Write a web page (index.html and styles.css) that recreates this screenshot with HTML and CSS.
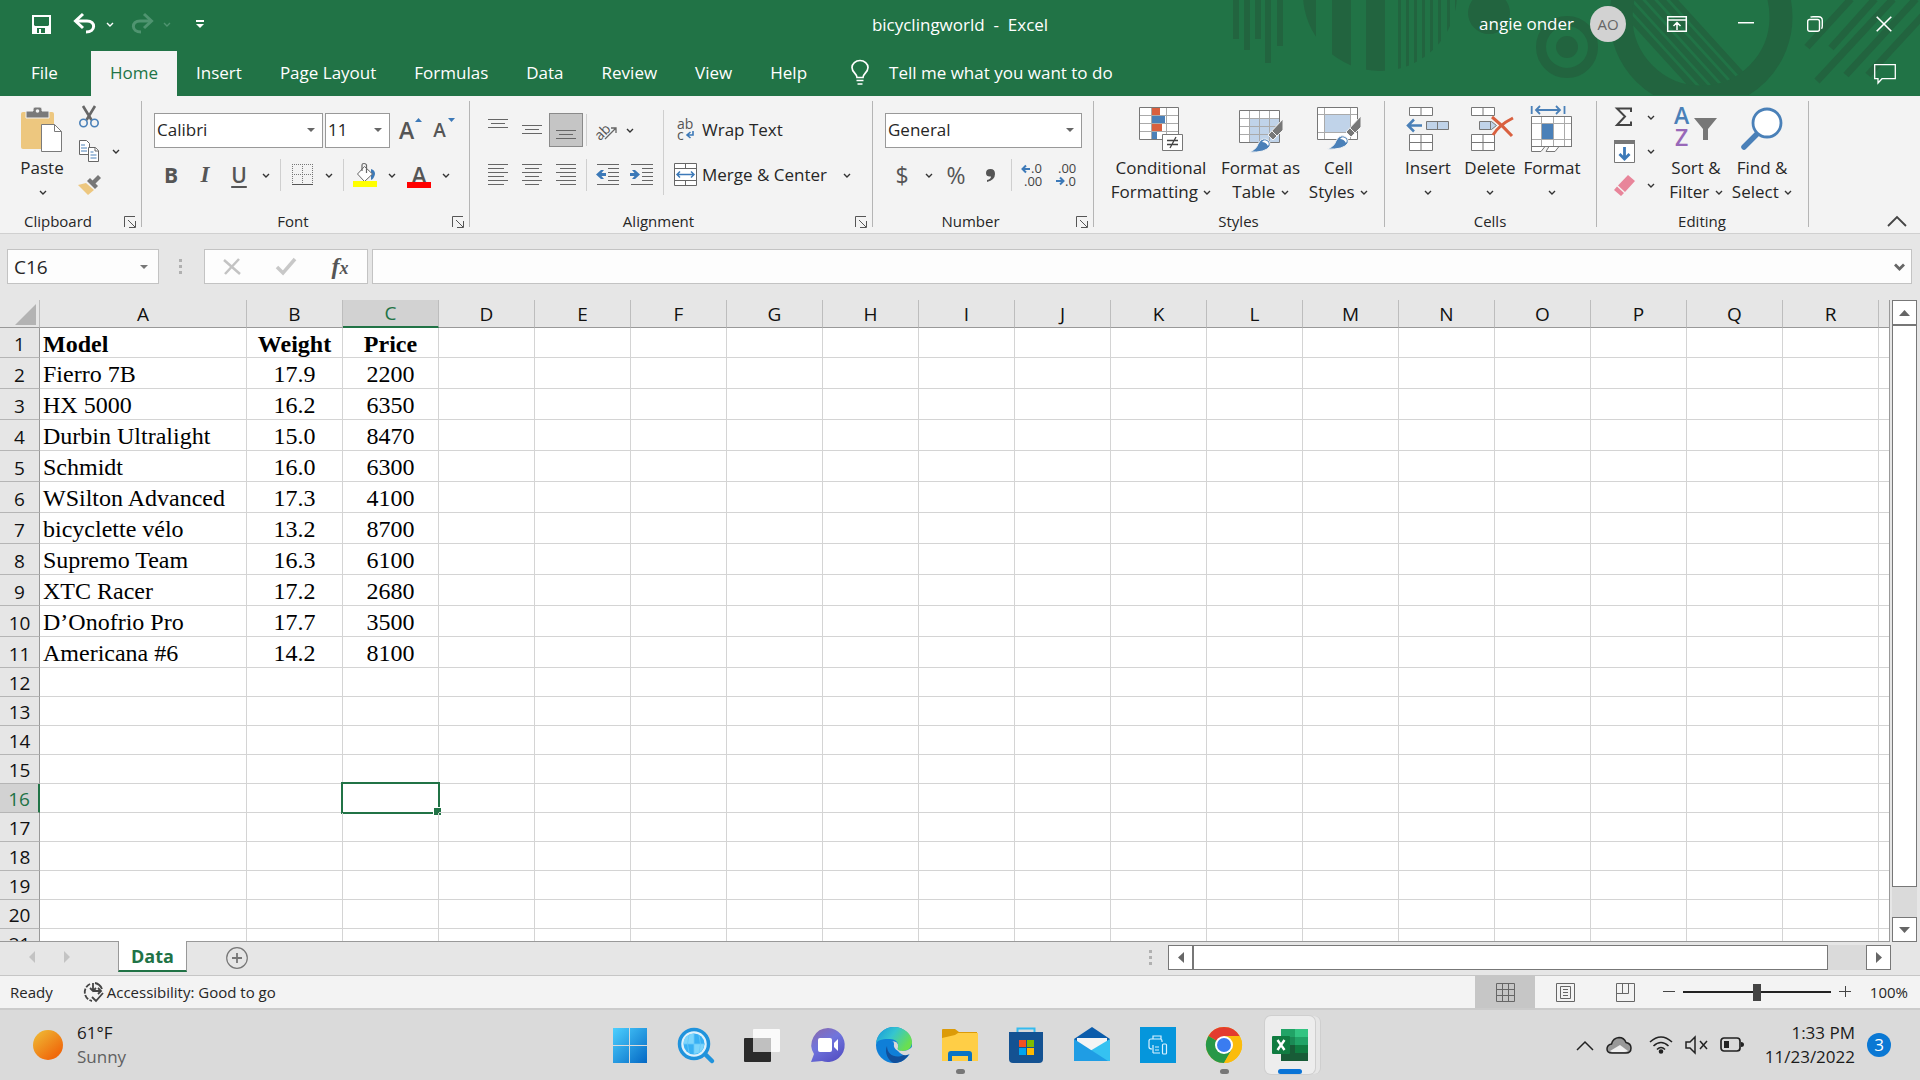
FILE: index.html
```html
<!DOCTYPE html>
<html lang="en">
<head>
  <meta charset="UTF-8">
  <title>bicyclingworld - Excel</title>
  <link rel="stylesheet" href="styles.css">
</head>
<body>
  <svg class="defs" width="0" height="0">
    <symbol id="chevron" viewBox="0 0 8 5"><path d="M1 1l3 3 3-3" fill="none" stroke="currentColor" stroke-width="1.4"/></symbol>
    <symbol id="launcher" viewBox="0 0 12 12"><path d="M.5 11V.5H11M4 4l7 7M11.500 5v6.500H5" fill="none" stroke="#555"/></symbol>
  </svg>

  <header class="header">
    <svg class="header-art" width="690" height="95" viewBox="1230 0 690 95" fill="#22643f">
      <clipPath id="ball"><circle cx="1380" cy="-6" r="77"/></clipPath>
      <clipPath id="hole"><circle cx="1701" cy="17" r="69"/></clipPath>
      <path d="M1233 0h6v39h-6zM1244 0h6v50h-6zM1255 0h6v39h-6zM1265 0h6v63h-6zM1277 0h6v46h-6z"/>
      <path clip-path="url(#ball)" d="M1303 0h13v72h-13zM1332 0h19v72h-19zM1366 0h19v72h-19zM1398 0h3v72h-3zM1406 0h3v72h-3zM1414 0h3v72h-3zM1422 0h3v72h-3zM1430 0h3v72h-3zM1438 0h3v72h-3zM1447 0h3v72h-3zM1455 0h3v72h-3z"/>
      <circle cx="1489" cy="13" r="21"/>
      <circle cx="1567" cy="47" r="26" fill="none" stroke="#22643f" stroke-width="10"/>
      <circle cx="1567" cy="47" r="11"/>
      <circle cx="1701" cy="17" r="80" fill="none" stroke="#22643f" stroke-width="23"/>
      <g clip-path="url(#hole)" stroke="#22643f" stroke-width="6">
        <path d="M1665-10l100 110M1653-10l100 110M1641-10l100 110M1629-10l100 110M1617-10l100 110M1605-10l100 110"/>
      </g>
      <path d="M1807 47L1851-1M1831 48L1875-1M1817 81L1893-1M1846 75L1916-1M1868 75l70-76" stroke="#22643f" stroke-width="7"/>
    </svg>

    <div class="title-row">
      <div class="quick">
        <button class="q-btn save" aria-label="Save"><svg width="19" height="19" viewBox="0 0 19 19"><path fill="#fff" fill-rule="evenodd" d="M0 0h19v19H0zM2 2v8l1 1h13l1-1V2zM5 13v5h2v-4h2v4h4v-5z"/></svg></button>
        <button class="q-btn undo" aria-label="Undo"><svg width="22" height="20" viewBox="0 0 22 20"><path d="M2 7h11c9 0 9 11-1 11" fill="none" stroke="#fff" stroke-width="3"/><path d="M9 0L1.500 7 9 14" fill="none" stroke="#fff" stroke-width="3"/></svg></button>
        <button class="q-btn drop" aria-label="Undo list"><svg width="8" height="5"><use href="#chevron"/></svg></button>
        <button class="q-btn redo" aria-label="Redo" disabled><svg width="22" height="20" viewBox="0 0 22 20"><path d="M20 7H9c-9 0-9 11 1 11" fill="none" stroke="#4f9470" stroke-width="3"/><path d="M13 0l7.500 7-7.500 7" fill="none" stroke="#4f9470" stroke-width="3"/></svg></button>
        <button class="q-btn drop faded" aria-label="Redo list" disabled><svg width="8" height="5"><use href="#chevron"/></svg></button>
        <button class="q-btn more" aria-label="Customize"><svg width="8" height="8" viewBox="0 0 8 8" fill="#fff"><path d="M0 0h8v2H0zM0 4h8L4 8z"/></svg></button>
      </div>
      <div class="doc-title">bicyclingworld&nbsp; - &nbsp;Excel</div>
      <div class="window-side">
        <span class="user">angie onder</span>
        <button class="avatar">AO</button>
        <div class="window-btns">
          <button class="w-btn" aria-label="Ribbon display"><svg width="20" height="16" viewBox="0 0 20 16" fill="none" stroke="#fff" stroke-width="1.500"><path d="M.7.700h18.600v14.600H.700zM.7 4h18.600M10 14V7M6.500 10L10 6.500l3.500 3.500"/></svg></button>
          <button class="w-btn" aria-label="Minimize"><svg width="16" height="16" viewBox="0 0 16 16"><path d="M0 6h16v1.500H0z" fill="#fff"/></svg></button>
          <button class="w-btn" aria-label="Restore"><svg width="16" height="16" viewBox="0 0 16 16" fill="none" stroke="#fff" stroke-width="1.400"><rect x=".7" y="3.500" width="11.800" height="11.800" rx="2"/><path d="M3.500 1.200Q4.500.700 6 .7h5.500q3.800 0 3.800 3.800V10q0 1.800-.8 2.800"/></svg></button>
          <button class="w-btn" aria-label="Close"><svg width="16" height="16" viewBox="0 0 16 16"><path d="M.7.700l14.600 14.600M15.300.700L.700 15.300" stroke="#fff" stroke-width="1.600"/></svg></button>
        </div>
      </div>
    </div>

    <nav class="tabs">
      <button class="tab file">File</button>
      <button class="tab active">Home</button>
      <button class="tab">Insert</button>
      <button class="tab">Page Layout</button>
      <button class="tab">Formulas</button>
      <button class="tab">Data</button>
      <button class="tab">Review</button>
      <button class="tab">View</button>
      <button class="tab">Help</button>
      <button class="tab tell">
        <svg width="18" height="25" viewBox="0 0 18 25" fill="none" stroke="#fff" stroke-width="1.700"><path d="M6 17.500c0-4-5-5-5-10a8 7 0 0 1 16 0c0 5-5 6-5 10zM5.500 20.500h7M6.500 24h5"/></svg>
        Tell me what you want to do
      </button>
      <button class="comment" aria-label="Comments"><svg width="22" height="20" viewBox="0 0 22 20" fill="none" stroke="#fff" stroke-width="1.300"><path d="M.7.700h20.600v14H8L4 19v-4.300H.700z"/></svg></button>
    </nav>
  </header>

  <section class="ribbon">
    <div class="group clipboard">
      <div class="group-body">
        <button class="big paste">
          <svg width="42" height="46" viewBox="0 0 42 46"><rect y="5" width="33" height="37" rx="2" fill="#edc77f"/><path d="M5 4h7V2q0-2 2-2h5q2 0 2 2v2h7v7H5z" fill="#7a7a7a" stroke="#f3f3f3"/><circle cx="16.500" cy="4" r="1.800" fill="#f3f3f3"/><path d="M20.500 17.500h13l7 7v20h-20z" fill="#fff" stroke="#7a7a7a"/><path d="M33.500 17.500v7h7" fill="none" stroke="#7a7a7a"/></svg>
          <span>Paste</span>
          <span><svg class="chev" width="8" height="5"><use href="#chevron"/></svg></span>
        </button>
        <div class="clip-col">
          <div class="tools"><button class="tool" aria-label="Cut"><svg width="20" height="22" viewBox="0 0 20 22" fill="none"><path d="M4 0l8.500 14M16 0L7.500 14" stroke="#666" stroke-width="2.600"/><circle cx="4.500" cy="17" r="3.700" stroke="#4a80b8" stroke-width="1.600"/><circle cx="15.500" cy="17" r="3.700" stroke="#4a80b8" stroke-width="1.600"/></svg></button></div>
          <div class="tools"><button class="tool" aria-label="Copy"><svg width="20" height="22" viewBox="0 0 20 22" fill="#fff" stroke="#666"><path d="M.5.500h7l3 3v11H.500z"/><path d="M2 5h4M2 8h6M2 11h6" stroke="#4a80b8"/><path d="M9.500 7.500h7l3 3v11h-10z"/><path d="M16 7.500V11h3.500"/><path d="M11.500 12h3M11.500 15h6M11.500 18h6" stroke="#4a80b8"/></svg></button><button class="arrow" aria-label="Copy options"><svg class="chev" width="8" height="5"><use href="#chevron"/></svg></button></div>
          <div class="tools"><button class="tool" aria-label="Format Painter"><svg width="23" height="20" viewBox="0 0 23 20"><path d="M0 10l8-2 8 7-6 5z" fill="#edc77f"/><path d="M9 6l3-3 8 8-3 3z" fill="#777"/><path d="M14 6l6-6 3 3-6 6z" fill="#777"/></svg></button></div>
        </div>
      </div>
      <div class="group-foot"><span>Clipboard</span><button class="launch" aria-label="Clipboard settings"><svg width="12" height="12"><use href="#launcher"/></svg></button></div>
    </div>

    <div class="group font">
      <div class="group-body rows">
        <div class="tools">
          <span class="combo font-name"><select aria-label="Font"><option>Calibri</option></select></span>
          <span class="combo font-size"><select aria-label="Font size"><option>11</option></select></span>
          <button class="tool glyph grow" aria-label="Increase font size">A<svg class="tip" width="7" height="4"><path d="M0 4l3.500-4L7 4z" fill="#3c79b8"/></svg></button>
          <button class="tool glyph shrink" aria-label="Decrease font size">A<svg class="tip" width="7" height="4"><path d="M0 0h7L3.500 4z" fill="#3c79b8"/></svg></button>
        </div>
        <div class="tools">
          <button class="tool glyph bold" aria-label="Bold">B</button>
          <button class="tool glyph italic" aria-label="Italic">I</button>
          <button class="tool glyph under" aria-label="Underline">U</button>
          <button class="arrow" aria-label="Underline options"><svg class="chev" width="8" height="5"><use href="#chevron"/></svg></button>
          <i class="sep"></i>
          <button class="tool" aria-label="Borders"><svg width="21" height="22" viewBox="0 0 21 22" fill="#777"><defs><pattern id="dotted" width="2" height="2" patternUnits="userSpaceOnUse"><path d="M0 0h1v1H0z"/></pattern></defs><path d="M0 0h21v1H0zM0 10h21v1H0zM0 0h1v20H0zM10 0h1v20h-1zM20 0h1v20h-1z" fill="url(#dotted)"/><path d="M0 20h21v1H0z" fill="#555"/></svg></button>
          <button class="arrow" aria-label="Border options"><svg class="chev" width="8" height="5"><use href="#chevron"/></svg></button>
          <i class="sep"></i>
          <button class="tool" aria-label="Fill color"><svg width="24" height="24" viewBox="0 0 24 24"><path d="M18 6q4 1 4 5-1 5-4 6z" fill="#3c79b8"/><path d="M11.500 3.500l8 7.500-8 7.500L4.500 11z" fill="#fff" stroke="#666"/><path d="M9 8V2q0-1.500 2-1.500t2.500 1.500v8" fill="none" stroke="#666" stroke-width="1.200"/><path d="M0 18h24v6H0z" fill="#ff0"/></svg></button>
          <button class="arrow" aria-label="Fill colors"><svg class="chev" width="8" height="5"><use href="#chevron"/></svg></button>
          <button class="tool glyph color" aria-label="Font color">A</button>
          <button class="arrow" aria-label="Font colors"><svg class="chev" width="8" height="5"><use href="#chevron"/></svg></button>
        </div>
      </div>
      <div class="group-foot"><span>Font</span><button class="launch" aria-label="Font settings"><svg width="12" height="12"><use href="#launcher"/></svg></button></div>
    </div>

    <div class="group align">
      <div class="group-body">
        <div class="rows">
          <div class="tools">
            <button class="tool" aria-label="Top align"><svg width="20" height="22" viewBox="0 0 20 22" stroke="#666"><path d="M0 .5h20M3 4.500h14M0 8.500h20"/></svg></button>
            <button class="tool" aria-label="Middle align"><svg width="20" height="22" viewBox="0 0 20 22" stroke="#666"><path d="M0 6.500h20M3 10.500h14M0 14.500h20"/></svg></button>
            <button class="tool on" aria-label="Bottom align"><svg width="20" height="22" viewBox="0 0 20 22" stroke="#666"><path d="M0 11.500h20M3 15.500h14M0 19.500h20"/></svg></button>
            <i class="sep slim"></i>
            <button class="tool" aria-label="Orientation"><svg width="22" height="20" viewBox="0 0 22 20"><text x="-2" y="17" transform="rotate(-45 6 12)" class="icon-text">ab</text><path d="M9 19L20 8M15 8h5v5" fill="none" stroke="#666" stroke-width="1.300"/></svg></button>
            <button class="arrow tight" aria-label="Orientation options"><svg class="chev" width="8" height="5"><use href="#chevron"/></svg></button>
          </div>
          <div class="tools">
            <button class="tool" aria-label="Align left"><svg width="20" height="22" viewBox="0 0 20 22" stroke="#666"><path d="M0 .5h20M0 4.500h16M0 8.500h20M0 12.500h16M0 16.500h20M0 20.500h16"/></svg></button>
            <button class="tool" aria-label="Center"><svg width="20" height="22" viewBox="0 0 20 22" stroke="#666"><path d="M0 .5h20M3 4.500h14M0 8.500h20M3 12.500h14M0 16.500h20M3 20.500h14"/></svg></button>
            <button class="tool" aria-label="Align right"><svg width="20" height="22" viewBox="0 0 20 22" stroke="#666"><path d="M0 .5h20M4 4.500h16M0 8.500h20M4 12.500h16M0 16.500h20M4 20.500h16"/></svg></button>
            <i class="sep slim"></i>
            <button class="tool" aria-label="Decrease indent"><svg width="23" height="22" viewBox="0 0 23 22"><path d="M1 .5h22M12 4.500h11M12 8.500h11M12 12.500h11M12 16.500h11M1 20.500h22" stroke="#666"/><path d="M0 10.500l5-4.500h3L5.500 9H10v3H5.500L8 15H5z" fill="#3c79b8"/></svg></button>
            <button class="tool" aria-label="Increase indent"><svg width="23" height="22" viewBox="0 0 23 22"><path d="M1 .5h22M12 4.500h11M12 8.500h11M12 12.500h11M12 16.500h11M1 20.500h22" stroke="#666"/><path d="M10 10.500L5 6H2l2.500 3H0v3h4.500L2 15h3z" fill="#3c79b8"/></svg></button>
          </div>
        </div>
        <i class="sep tall"></i>
        <div class="rows">
          <button class="wide"><svg width="24" height="24" viewBox="0 0 24 24"><text x="3" y="11" class="icon-text">ab</text><text x="3" y="22" class="icon-text">c</text><path d="M19 13v4h-5M16.500 14L13 17l3.500 3" fill="none" stroke="#3c79b8" stroke-width="1.600"/></svg>Wrap Text</button>
          <div class="tools">
            <button class="wide"><svg width="24" height="24" viewBox="0 0 24 24"><path d="M.5.500h22v22H.500z" fill="#fff" stroke="#666"/><path d="M1 5.500h21M1 17.500h21M11.500 1v4M11.500 18v4" stroke="#666"/><path d="M3 11.500h17M6 8.500l-3 3 3 3M17 8.500l3 3-3 3" fill="none" stroke="#3c79b8" stroke-width="1.500"/></svg>Merge &amp; Center</button>
            <button class="arrow merge-arrow" aria-label="Merge options"><svg class="chev" width="8" height="5"><use href="#chevron"/></svg></button>
          </div>
        </div>
      </div>
      <div class="group-foot"><span>Alignment</span><button class="launch" aria-label="Alignment settings"><svg width="12" height="12"><use href="#launcher"/></svg></button></div>
    </div>

    <div class="group number">
      <div class="group-body rows">
        <div class="tools"><span class="combo format"><select aria-label="Number format"><option>General</option></select></span></div>
        <div class="tools">
          <button class="tool glyph light" aria-label="Currency">$</button>
          <button class="arrow" aria-label="Currency options"><svg class="chev" width="8" height="5"><use href="#chevron"/></svg></button>
          <button class="tool glyph light" aria-label="Percent">%</button>
          <button class="tool" aria-label="Comma style"><svg width="9" height="13" viewBox="0 0 9 13"><path d="M4.500 0Q9 0 9 5q0 6-8 8v-2q4-1 4-3.500Q0 8 0 4q0-4 4.500-4z" fill="#555"/></svg></button>
          <i class="sep"></i>
          <button class="tool" aria-label="Increase decimal"><svg width="24" height="24" viewBox="0 0 24 24"><text x="10" y="10" class="dec">.0</text><text x="3" y="23" class="dec">.00</text><path d="M9 6H2M5 2.500L1.500 6 5 9.500" fill="none" stroke="#3c79b8" stroke-width="2"/></svg></button>
          <button class="tool" aria-label="Decrease decimal"><svg width="24" height="24" viewBox="0 0 24 24"><text x="3" y="10" class="dec">.00</text><text x="10" y="23" class="dec">.0</text><path d="M1 18h7M5 14.500L8.500 18 5 21.500" fill="none" stroke="#3c79b8" stroke-width="2"/></svg></button>
        </div>
      </div>
      <div class="group-foot"><span>Number</span><button class="launch" aria-label="Number settings"><svg width="12" height="12"><use href="#launcher"/></svg></button></div>
    </div>

    <div class="group styles">
      <div class="group-body">
        <button class="big">
          <svg width="44" height="46" viewBox="0 0 44 46"><path d="M.5.500h39v32H.500z" fill="#fff"/><path d="M1 8.500h38M1 16.500h38M1 24.500h38M12.500 1v31M27.500 1v31" stroke="#aaa"/><path d="M.5.500h39v32H.500z" fill="none" stroke="#777"/><path d="M13 1h8v7h-8zM13 17h10v7H13z" fill="#d9603f"/><path d="M13 9h13v7H13zM13 25h5v7h-5z" fill="#4a80b8"/><path d="M23.500 27.500h20v16h-20z" fill="#fff" stroke="#777"/><path d="M28 33.500h11M28 37.500h11M37 30l-6 11" stroke="#444" stroke-width="1.300"/></svg>
          <span>Conditional</span>
          <span>Formatting <svg class="chev" width="8" height="5"><use href="#chevron"/></svg></span>
        </button>
        <button class="big">
          <svg width="44" height="46" viewBox="0 0 44 46"><path d="M.5 3.500h40v32H.500z" fill="#fff"/><path d="M10 12h30v23H10z" fill="#c0d3e9"/><path d="M1 11.500h39M1 19.500h39M1 27.500h39M10.500 4v31M20.500 4v31M30.500 4v31" stroke="#aaa"/><path d="M.5 3.500h40v32H.500z" fill="none" stroke="#777"/><path d="M44 12v11L34 33l-5-5z" fill="#777" stroke="#f3f3f3"/><path d="M33 24l5 5" stroke="#f3f3f3"/><path d="M10 45q7-2 9-8 3-6 8-5 5 2 4 7-4 7-21 6z" fill="#4a80b8" stroke="#f3f3f3"/><path d="M23 35q2-3 5-1 3 2 1 5-2-4-6-4z" fill="#fff"/></svg>
          <span>Format as</span>
          <span>Table <svg class="chev" width="8" height="5"><use href="#chevron"/></svg></span>
        </button>
        <button class="big">
          <svg width="44" height="46" viewBox="0 0 44 46"><path d="M.5.500h40v32H.500z" fill="#fff"/><path d="M8 8h25v17H8z" fill="#c0d3e9"/><path d="M1 7.500h39M1 25.500h39M7.500 1v31M33.500 1v31" stroke="#aaa"/><path d="M.5.500h40v32H.500z" fill="none" stroke="#777"/><path d="M44 9v11L34 30l-5-5z" fill="#777" stroke="#f3f3f3"/><path d="M33 21l5 5" stroke="#f3f3f3"/><path d="M10 42q7-2 9-8 3-6 8-5 5 2 4 7-4 7-21 6z" fill="#4a80b8" stroke="#f3f3f3"/><path d="M23 32q2-3 5-1 3 2 1 5-2-4-6-4z" fill="#fff"/></svg>
          <span>Cell</span>
          <span>Styles <svg class="chev" width="8" height="5"><use href="#chevron"/></svg></span>
        </button>
      </div>
      <div class="group-foot"><span>Styles</span></div>
    </div>

    <div class="group cells">
      <div class="group-body">
        <button class="big">
          <svg width="44" height="46" viewBox="0 0 44 46" fill="#fff" stroke="#777"><path d="M3.500.500h23v8h-23zM15 1v7M3.500 27.500h23v16h-23zM4 35.500h22M15 28v15"/><path d="M20.500 14.500h22v8h-22zM31.500 15v7" fill="#c0d3e9"/><path d="M16 18.500H2M8 12.500l-6 6 6 6" fill="none" stroke="#4a80b8" stroke-width="2.500"/></svg>
          <span>Insert</span>
          <span><svg class="chev" width="8" height="5"><use href="#chevron"/></svg></span>
        </button>
        <button class="big">
          <svg width="44" height="46" viewBox="0 0 44 46" fill="#fff" stroke="#777"><path d="M3.500.500h23v8h-23zM15 1v7M3.500 27.500h23v16h-23zM4 35.500h22M15 28v15"/><path d="M11.500 14.500h12l5 4-5 4h-12zM22.500 15v7" fill="#c0d3e9"/><path d="M24 10q10 8 20 19M45 11Q31 18 25 28" fill="none" stroke="#d9603f" stroke-width="3"/></svg>
          <span>Delete</span>
          <span><svg class="chev" width="8" height="5"><use href="#chevron"/></svg></span>
        </button>
        <button class="big">
          <svg width="42" height="46" viewBox="0 0 42 46"><path d="M.5 9.500h40v30H28l-4 5h-9l3-5h-4l-4 5H.500z" fill="#fff" stroke="#777"/><path d="M1 16.500h39M1 32.500h39M10.500 10v29M22.500 10v29M33.500 10v29" stroke="#aaa"/><path d="M0 39.500h41" stroke="#777"/><path d="M11 17h11v15H11z" fill="#4a80b8"/><path d="M.7-1v8M33.500-1v8M5 3h24M9-1L5 3l4 4M25-1l4 4-4 4" fill="none" stroke="#4a80b8" stroke-width="1.800"/></svg>
          <span>Format</span>
          <span><svg class="chev" width="8" height="5"><use href="#chevron"/></svg></span>
        </button>
      </div>
      <div class="group-foot"><span>Cells</span></div>
    </div>

    <div class="group editing">
      <div class="group-body">
        <div class="edit-col">
          <div class="tools"><button class="tool" aria-label="AutoSum"><svg width="20" height="20" viewBox="0 0 20 20"><path d="M17 5V1.500H3l8 8-8 8.500h14v-3.500" fill="none" stroke="#444" stroke-width="2"/></svg></button><button class="arrow" aria-label="AutoSum options"><svg class="chev" width="8" height="5"><use href="#chevron"/></svg></button></div>
          <div class="tools"><button class="tool" aria-label="Fill"><svg width="21" height="23" viewBox="0 0 21 23"><path d="M.5.500h20v22H.500z" fill="#fff" stroke="#777"/><path d="M0 0h21v4H0z" fill="#777"/><path d="M10.500 7v12M5.500 14l5 5 5-5" fill="none" stroke="#3c79b8" stroke-width="2.800"/></svg></button><button class="arrow" aria-label="Fill options"><svg class="chev" width="8" height="5"><use href="#chevron"/></svg></button></div>
          <div class="tools"><button class="tool" aria-label="Clear"><svg width="21" height="21" viewBox="0 0 21 21" fill="#e8859a"><path d="M14 0l7 6-10 11-7-6.500zM3 11.500l7 6.500-3 3-7-6z"/></svg></button><button class="arrow" aria-label="Clear options"><svg class="chev" width="8" height="5"><use href="#chevron"/></svg></button></div>
        </div>
        <button class="big">
          <svg width="44" height="46" viewBox="0 0 44 46"><text x="0" y="17" class="sort-a">A</text><text x="1" y="39" class="sort-z">Z</text><path d="M20 11h23L34 22v11h-5V22z" fill="#777"/></svg>
          <span>Sort &amp;</span>
          <span>Filter <svg class="chev" width="8" height="5"><use href="#chevron"/></svg></span>
        </button>
        <button class="big">
          <svg width="42" height="46" viewBox="0 0 42 46"><path d="M3 40l14-14" stroke="#4a80b8" stroke-width="5.500" stroke-linecap="round"/><circle cx="26" cy="16" r="14" fill="#fff" stroke="#4a80b8" stroke-width="2.800"/></svg>
          <span>Find &amp;</span>
          <span>Select <svg class="chev" width="8" height="5"><use href="#chevron"/></svg></span>
        </button>
      </div>
      <div class="group-foot"><span>Editing</span></div>
    </div>

    <button class="collapse" aria-label="Collapse ribbon"><svg width="20" height="12" viewBox="0 0 20 12"><path d="M1 11l9-9 9 9" fill="none" stroke="#444" stroke-width="1.800"/></svg></button>
  </section>

  <section class="formula-bar">
    <div class="name-box"><input type="text" value="C16" aria-label="Name box"><svg width="8" height="4"><path d="M0 0h8L4 4z" fill="#777"/></svg></div>
    <svg class="dots" width="3" height="15" fill="#b0b0b0"><path d="M0 0h3v3H0zM0 6h3v3H0zM0 12h3v3H0z"/></svg>
    <div class="fx-box">
      <button aria-label="Cancel"><svg width="18" height="16" viewBox="0 0 18 16"><path d="M1 1l16 14M16 0L2 15" stroke="#c3c3c3" stroke-width="2.500"/></svg></button>
      <button aria-label="Enter"><svg width="20" height="17" viewBox="0 0 20 17"><path d="M1 9l6 6L19 1" fill="none" stroke="#c8c8c8" stroke-width="3.500"/></svg></button>
      <button class="fx" aria-label="Insert function">f<small>x</small></button>
    </div>
    <div class="formula"><input type="text" aria-label="Formula"><svg width="11" height="8" viewBox="0 0 11 8"><path d="M1 1.500l4.500 4.500L10 1.500" fill="none" stroke="#666" stroke-width="2.800"/></svg></div>
  </section>

  <main class="sheet">
    <div class="grid-wrap">
      <table class="grid">
        <colgroup id="cols"></colgroup>
        <thead><tr id="letters"></tr></thead>
        <tbody id="rows"></tbody>
      </table>
    </div>
    <div class="v-scroll">
      <button aria-label="Scroll up"><svg width="11" height="6"><path d="M0 6l5.500-6L11 6z"/></svg></button>
      <div class="v-thumb"></div>
      <button aria-label="Scroll down"><svg width="11" height="6"><path d="M0 0h11L5.500 6z"/></svg></button>
    </div>
  </main>

  <section class="sheet-tabs">
    <button class="nav-arrow" aria-label="Previous sheet"><svg width="6" height="12"><path d="M6 0v12L0 6z"/></svg></button>
    <button class="nav-arrow" aria-label="Next sheet"><svg width="6" height="12"><path d="M0 0v12l6-6z"/></svg></button>
    <button class="sheet-tab">Data</button>
    <button class="add" aria-label="New sheet"><svg width="22" height="22" viewBox="0 0 22 22" fill="none" stroke="#777"><circle cx="11" cy="11" r="10.300" stroke-width="1.200"/><path d="M11 6v10M6 11h10" stroke-width="1.800"/></svg></button>
    <svg class="h-dots" width="3" height="15" fill="#b0b0b0"><path d="M0 0h3v3H0zM0 6h3v3H0zM0 12h3v3H0z"/></svg>
    <div class="h-scroll">
      <button aria-label="Scroll left"><svg width="6" height="11"><path d="M6 0v11L0 5.500z"/></svg></button>
      <div class="h-thumb"></div>
      <button aria-label="Scroll right"><svg width="6" height="11"><path d="M0 0v11l6-5.500z"/></svg></button>
    </div>
  </section>

  <footer class="status">
    <span class="ready">Ready</span>
    <button class="access"><svg width="21" height="21" viewBox="0 0 21 21" fill="none" stroke="#444" stroke-width="1.800"><path d="M7 2A9 9 0 0 0 9 19" stroke-dasharray="5 1.500"/><path d="M12 1q5 1 7 6M10 1v8M7 6l3 3 3-3M10 9h8M15 6l3 3-3 3M9 15l4 4 7-8"/></svg>Accessibility: Good to go</button>
    <div class="views">
      <button class="view on" aria-label="Normal"><svg width="19" height="19" viewBox="0 0 19 19" fill="none" stroke="#666"><path d="M.5.500h18v18H.500zM.5 6.500h18M.5 12.500h18M6.500.500v18M12.500.500v18"/></svg></button>
      <button class="view" aria-label="Page layout"><svg width="19" height="19" viewBox="0 0 19 19" fill="none" stroke="#666"><path d="M.5.500h18v18H.500zM4.500 3.500h10v12h-10zM7 6.500h5M7 9.500h5M7 12.500h5"/></svg></button>
      <button class="view" aria-label="Page break preview"><svg width="19" height="19" viewBox="0 0 19 19" fill="none" stroke="#666"><path d="M.5.500h18v18H.500zM.5 10.500h12v-10M6.500.500v10"/></svg></button>
    </div>
    <div class="zoom">
      <button aria-label="Zoom out"><svg width="12" height="12"><path d="M0 5.500h12" stroke="#444"/></svg></button>
      <input type="range" min="0" max="100" value="50" aria-label="Zoom">
      <button aria-label="Zoom in"><svg width="12" height="12"><path d="M0 5.500h12M6.500 0v11" stroke="#444"/></svg></button>
      <span class="percent">100%</span>
    </div>
  </footer>

  <div class="taskbar">
    <button class="weather">
      <i class="sun"></i>
      <span class="weather-text"><span>61°F</span><span class="muted">Sunny</span></span>
    </button>
    <div class="apps">
      <button class="app" aria-label="Start"><svg width="36" height="36" viewBox="0 0 36 36"><defs><linearGradient id="win" x1="0" y1="0" x2="1" y2="1"><stop offset="0" stop-color="#4cd0ff"/><stop offset="1" stop-color="#0468c4"/></linearGradient></defs><path fill="url(#win)" d="M1 1h16v17H1zM18 1h17v17H18zM1 19h16v17H1zM18 19h17v17H18z"/></svg></button>
      <button class="app" aria-label="Search"><svg width="36" height="36" viewBox="0 0 36 36"><path d="M27 27l7 7" stroke="#2093dc" stroke-width="4.500" stroke-linecap="round"/><circle cx="16" cy="17" r="14.500" fill="#dff1fb" stroke="#2093dc" stroke-width="3.500"/><circle cx="16" cy="17" r="10.500" fill="#38b0f3"/><path d="M6 13q2-6 10-6.500V17H5.500zM16 17h10q0 6-5 9l-5 1z" fill="#7dd5fb"/><path d="M6 17h21M16 7v20M11 8q-3 9 0 18M21 8q3 9 0 18" fill="none" stroke="#64c8fa" stroke-width=".8"/></svg></button>
      <button class="app" aria-label="Task view"><svg width="36" height="36" viewBox="0 0 36 36"><rect y="11" width="27" height="24" rx="1" fill="#2b2b2b"/><rect x="9" y="2" width="27" height="23" rx="1" fill="#fff" fill-opacity=".85"/><path d="M9 11h18v14H9z" fill="#c0c0c0"/></svg></button>
      <button class="app" aria-label="Chat"><svg width="36" height="36" viewBox="0 0 36 36"><defs><linearGradient id="chat" x1="0" y1="0" x2=".6" y2="1"><stop offset="0" stop-color="#8c68a8"/><stop offset=".5" stop-color="#7075dd"/><stop offset="1" stop-color="#5754c6"/></linearGradient></defs><path d="M18 1a17 17 0 1 1-6 33L1 35l3-8A17 17 0 0 1 18 1z" fill="url(#chat)"/><rect x="8" y="11" width="14" height="14" rx="2" fill="#fff"/><path d="M24 16l4-4v12l-4-4z" fill="#fff"/></svg></button>
      <button class="app" aria-label="Edge"><svg width="36" height="36" viewBox="0 0 36 36"><defs><linearGradient id="edge" x1="0" y1="0" x2="1" y2=".5"><stop offset="0" stop-color="#1595dd"/><stop offset=".5" stop-color="#35c5cf"/><stop offset="1" stop-color="#6adf50"/></linearGradient></defs><circle cx="18" cy="18" r="18" fill="#0f7fd8"/><path d="M0 17C1 6 9 0 18 0c10 0 18 7 18 15 0 6-4 9-9 9-4 0-7-1-5-4 1-4-2-8-8-8S2 12 0 17z" fill="url(#edge)"/><path d="M11 19c0 8 7 12 14 10 4-1 7-3 8-2-4 7-10 9-15 9-6-2-10-11-7-17z" fill="#114f9b"/><path d="M22 24q-5-3-4-7 0-3-3-3 8 0 7 6-2 4 5 4 5 0 9-4v5q-2 3-5 3-5 1-9-4z" fill="#dadada"/></svg></button>
      <button class="app" aria-label="File Explorer"><svg width="36" height="36" viewBox="0 0 36 36"><path d="M0 3q0-1 1-1h12l4 3h18v8H0z" fill="#dc9b08"/><path d="M0 11l13-3 3-2h20v28H0z" fill="#ffce46"/><path d="M6 34V27q0-3 3-3h18q3 0 3 3v7h-4v-5H10v5z" fill="#0a73c4"/></svg><i class="mark"></i></button>
      <button class="app" aria-label="Store"><svg width="36" height="36" viewBox="0 0 36 36"><path d="M9.500 7V1.500h17V7" fill="none" stroke="#35bbef" stroke-width="2"/><path d="M1 5h34v27q0 4-4 4H5q-4 0-4-4z" fill="#145292"/><path d="M11 13h7v7h-7z" fill="#f25022"/><path d="M19 13h7v7h-7z" fill="#7fba00"/><path d="M11 21h7v7h-7z" fill="#00a4ef"/><path d="M19 21h7v7h-7z" fill="#ffb900"/></svg></button>
      <button class="app" aria-label="Mail"><svg width="36" height="36" viewBox="0 0 36 36"><path d="M0 12L18 0l18 12v10H0z" fill="#0b5cab"/><path d="M3 11h30v14H3z" fill="#f4f4f4"/><path d="M36 12L16 24l14 10h6z" fill="#35c2f1"/><path d="M0 12l34 22H0z" fill="#1f9de4"/></svg></button>
      <button class="app" aria-label="Printer"><svg width="36" height="36" viewBox="0 0 36 36"><path d="M0 0h36v36H0z" fill="#0596dc"/><path d="M13 12V9h8v3M22 15v-1q0-2-2-2H11q-2 0-2 2v6q0 2 3 2M13 26v-8M13 26h7M15 20h4M15 23h4" fill="none" stroke="#d9f1ff" stroke-width="1.200"/><rect x="22.500" y="17" width="4" height="10" rx="1" fill="none" stroke="#d9f1ff" stroke-width="1.200"/></svg></button>
      <button class="app" aria-label="Chrome"><svg width="36" height="36" viewBox="0 0 36 36"><circle cx="18" cy="18" r="18" fill="#fbbc0c"/><path d="M18 18L2.400 9A18 18 0 0 1 33.600 9z" fill="#e33b2e"/><path d="M18 18L2.400 9A18 18 0 0 0 18 36l7.800-13.500z" fill="#279847"/><path d="M18 9h15.600L26 18z" fill="#e33b2e"/><path d="M33.600 9H18v9l7.800 4.500L18 36A18 18 0 0 0 33.600 9z" fill="#fbbc0c"/><circle cx="18" cy="18" r="9" fill="#fff"/><circle cx="18" cy="18" r="7" fill="#3a7cf0"/></svg><i class="mark"></i></button>
      <button class="app current" aria-label="Excel"><svg width="36" height="36" viewBox="0 0 36 36"><path d="M9 2h14v8H9z" fill="#21a366"/><path d="M23 2h13v8H23z" fill="#33c481"/><path d="M9 10h14v8H9z" fill="#1b8a55"/><path d="M23 10h13v8H23z" fill="#21a366"/><path d="M9 18h27v16H9z" fill="#185c37"/><path d="M23 18h13v8H23z" fill="#107c41"/><rect y="9" width="18" height="18" rx="1" fill="#107c41"/><path d="M5.500 13l7 10M12.500 13l-7 10" stroke="#fff" stroke-width="2.400"/></svg><i class="mark long"></i></button>
    </div>
    <div class="tray">
      <button aria-label="Hidden icons"><svg width="18" height="11" viewBox="0 0 18 11"><path d="M1 10l8-8 8 8" fill="none" stroke="#222" stroke-width="1.500"/></svg></button>
      <button aria-label="OneDrive"><svg width="26" height="18" viewBox="0 0 26 18"><path d="M6 17q-5 0-5-4 0-4 4.500-5Q7 2 13 1.500q5 0 7 5 5 1 5 5.500 0 5-5 5z" fill="#999" stroke="#222" stroke-width="1.500"/><path d="M4 15l10-6 8 6q-2 1-4 1H6z" fill="#f0f0f0"/></svg></button>
      <button class="wifi" aria-label="Wi-Fi"><svg width="24" height="18" viewBox="0 0 24 18" fill="none" stroke="#222" stroke-width="1.600"><path d="M1 6q11-10 22 0M4.500 10q7.500-7 15 0M8 13.500q4-4 8 0"/><circle cx="12" cy="15.500" r="1.500" fill="#222"/></svg></button>
      <button aria-label="Volume"><svg width="23" height="18" viewBox="0 0 23 18" fill="none" stroke="#222" stroke-width="1.500"><path d="M1 6h4l5-5v16l-5-5H1zM15 5l7 8M22 5l-7 8"/></svg></button>
      <button aria-label="Battery"><svg width="24" height="16" viewBox="0 0 24 16"><rect x="1" y="1" width="19" height="13" rx="3" fill="none" stroke="#222" stroke-width="1.700"/><path d="M4 4h5v7H4zM21 5q3 0 3 2.500T21 10z" fill="#222"/></svg></button>
      <button class="clock"><span>1:33 PM</span><span>11/23/2022</span></button>
      <button class="badge">3</button>
    </div>
  </div>

  <script src="script.js"></script>
</body>
</html>
```

FILE: styles.css
```css
* {
  box-sizing: border-box;
}

body {
  display: flex;
  flex-direction: column;
  height: 100vh;
  margin: 0;
  overflow: hidden;
  font-family: "Open Sans", "Noto Sans", sans-serif;
  font-size: 17px;
  line-height: 24px;
  color: #262626;
  background: #e6e6e6;
}

button,
input,
select {
  margin: 0;
  padding: 0;
  border: none;
  border-radius: 0;
  background: none;
  color: inherit;
  font: inherit;
}

svg {
  display: block;
  flex: none;
  overflow: visible;
}

.defs {
  position: absolute;
}

/* title bar and tabs */
.header {
  position: relative;
  background: #217346;
  color: #fff;
}

.header-art {
  position: absolute;
  top: 0;
  right: 0;
  overflow: hidden;
}

.title-row {
  position: relative;
  display: grid;
  grid-template-columns: 1fr auto 1fr;
  align-items: center;
  height: 48px;
}

.quick {
  display: flex;
  align-items: center;
  padding-left: 32px;
}

.q-btn {
  display: flex;
  justify-content: center;
}

.undo {
  margin-left: 23px;
}

.drop {
  width: 28px;
}

.redo {
  margin-left: 7px;
}

.faded {
  color: #4f9470;
}

.more {
  margin-left: 15px;
}

.doc-title {
  padding-top: 2px;
}

.window-side {
  display: flex;
  justify-content: flex-end;
  align-items: center;
}

.avatar {
  width: 36px;
  height: 36px;
  margin: 0 16px;
  border-radius: 50%;
  background: #d2d2d2;
  color: #666;
  font-size: 15px;
}

.window-btns {
  display: flex;
  padding-right: 2px;
}

.w-btn {
  display: flex;
  justify-content: center;
  align-items: center;
  width: 69px;
  height: 46px;
}

.tabs {
  position: relative;
  display: flex;
  height: 45px;
  margin-top: 3px;
}

.tab {
  padding: 0 19px 2px;
}

.tab.file {
  width: 91px;
  padding-left: 31px;
  text-align: left;
}

.tab.active {
  background: #f3f3f3;
  color: #217346;
}

.tab.tell {
  display: flex;
  align-items: center;
  gap: 20px;
  margin-left: 6px;
}

.comment {
  margin: 0 24px 0 auto;
}

/* ribbon */
.ribbon {
  display: flex;
  height: 138px;
  background: #f3f3f3;
  border-bottom: 1px solid #d0d0d0;
}

.group {
  position: relative;
  display: flex;
  flex-direction: column;
  flex: none;
}

.group::after {
  content: "";
  position: absolute;
  right: 0;
  top: 5px;
  bottom: 6px;
  width: 1px;
  background: #b5b5b5;
}

.clipboard {
  width: 142px;
}

.font {
  width: 328px;
}

.align {
  width: 403px;
}

.number {
  width: 221px;
}

.styles {
  width: 291px;
}

.cells {
  width: 212px;
}

.editing {
  width: 212px;
}

.group-body {
  display: flex;
  height: 114px;
  padding-left: 12px;
}

.group-foot {
  display: flex;
  height: 23px;
  font-size: 15px;
  line-height: 23px;
  text-align: center;
}

.group-foot span {
  flex: 1;
  padding-right: 2px;
}

.launch {
  display: flex;
  justify-content: center;
  align-items: center;
  width: 24px;
}

.rows {
  display: flex;
  flex-direction: column;
  gap: 9px;
  padding-top: 16px;
}

.tools {
  display: flex;
  align-items: center;
  height: 36px;
}

.tool {
  display: flex;
  justify-content: center;
  align-items: center;
  width: 34px;
  height: 34px;
}

.tool.on {
  background: #c5c5c5;
  border: 1px solid #8a8a8a;
}

.arrow {
  display: flex;
  justify-content: center;
  width: 20px;
}

.arrow.tight {
  width: 12px;
}

.chev {
  display: inline-block;
  color: #333;
}

.sep {
  width: 1px;
  height: 32px;
  margin: 0 4px;
  background: #cfcfcf;
}

.sep.slim {
  margin: 0 3px;
}

.sep.tall {
  height: 85px;
  margin: 14px 10px 0 5px;
}

.combo {
  position: relative;
  display: flex;
}

.combo select {
  width: 100%;
  height: 35px;
  padding: 0 2px;
  border: 1px solid #999;
  background: #fff;
  appearance: none;
}

.combo::after {
  content: "";
  position: absolute;
  top: 15px;
  right: 8px;
  border: 4px solid transparent;
  border-top-color: #666;
  border-bottom: none;
}

.font-name {
  width: 169px;
  margin-right: 2px;
}

.font-size {
  width: 65px;
}

.format {
  width: 197px;
}

.glyph {
  position: relative;
  color: #555;
  font-size: 23px;
  font-weight: 600;
}

.glyph.light {
  font-weight: 400;
}

.glyph .tip {
  position: absolute;
  top: 5px;
  right: 1px;
}

.grow,
.shrink {
  width: 33px;
}

.shrink {
  font-size: 19px;
}

.bold,
.under {
  font-size: 21px;
  font-weight: 700;
}

.italic {
  font-family: "Liberation Serif", serif;
  font-style: italic;
  font-weight: 700;
}

.under {
  font-weight: 600;
  text-decoration: underline;
  text-underline-offset: 3px;
}

.color::after {
  content: "";
  position: absolute;
  left: 5px;
  right: 5px;
  bottom: 4px;
  height: 6px;
  background: #f00;
}

.icon-text {
  fill: #555;
  font-size: 14px;
}

.dec {
  fill: #444;
  font-size: 13px;
}

.sort-a,
.sort-z {
  fill: #4a80b8;
  font-size: 23px;
  font-weight: 600;
}

.sort-z {
  fill: #9868b8;
}

.wide {
  display: flex;
  align-items: center;
  gap: 4px;
  height: 36px;
}

.merge-arrow {
  margin-left: 10px;
}

.align .group-body {
  padding-left: 11px;
}

.clipboard .group-body {
  padding-left: 10px;
}

.clip-col,
.edit-col {
  display: flex;
  flex-direction: column;
  padding-top: 4px;
}

.clip-col .tools,
.edit-col .tools {
  height: 34px;
}

.editing .group-body {
  padding-left: 10px;
}

.edit-col {
  width: 56px;
}

.big {
  display: flex;
  flex-direction: column;
  align-items: center;
  padding-top: 11px;
}

.big > svg {
  margin-bottom: 3px;
}

.big span {
  height: 24px;
  white-space: nowrap;
}

.big span .chev {
  margin: 0 0 3px 1px;
}

.paste {
  width: 64px;
}

.clip-col {
  margin-left: -2px;
}

.paste .chev,
.cells span .chev {
  margin-left: 0;
}

.styles .group-body {
  display: grid;
  grid-template-columns: 110px 89px 67px;
}

.cells .big {
  width: 62px;
}

.editing .big {
  width: 66px;
}

.collapse {
  align-self: flex-end;
  margin: 0 13px 6px auto;
}

/* formula bar */
.formula-bar {
  display: flex;
  align-items: center;
  height: 66px;
  padding: 0 8px 1px 7px;
}

.name-box,
.fx-box,
.formula {
  display: flex;
  align-items: center;
  height: 35px;
  border: 1px solid #c3c3c3;
  background: #fdfdfd;
}

.name-box {
  width: 152px;
  padding: 0 10px 0 6px;
}

.name-box input,
.formula input {
  flex: 1;
  min-width: 0;
  height: 33px;
  outline: none;
  font-size: 19px;
}

.dots {
  margin: 0 22px 0 20px;
}

.fx-box {
  width: 164px;
  margin-right: 4px;
}

.fx-box button {
  display: flex;
  justify-content: center;
  flex: 1;
}

.fx-box .fx {
  display: block;
  color: #555;
  font: italic bold 24px/30px "Liberation Serif", serif;
}

.fx small {
  font-size: 18px;
}

.formula {
  flex: 1;
  padding-right: 6px;
}

/* worksheet */
.sheet {
  display: flex;
  flex: 1;
  min-height: 0;
}

.grid-wrap {
  flex: 1;
  overflow: hidden;
  border-right: 1px solid #999;
  border-bottom: 1px solid #999;
}

.grid {
  width: 100%;
  table-layout: fixed;
  border-collapse: separate;
  border-spacing: 0;
  background: #fff;
}

.col-head {
  width: 40px;
}

.col-a {
  width: 207px;
}

.col-std {
  width: 96px;
}

.grid th {
  padding: 0;
  border-right: 1px solid #bdbdbd;
  border-bottom: 1px solid #999;
  background: #e6e6e6;
  color: #111;
  font-size: 19px;
  font-weight: 400;
  line-height: 26px;
}

.grid thead th {
  height: 28px;
  padding-top: 1px;
}

.grid tbody th {
  border-right-color: #999;
  border-bottom-color: #b5b5b5;
  vertical-align: bottom;
}

.grid .corner {
  padding-right: 3px;
  border-right-color: #bdbdbd;
}

.corner svg {
  margin-left: auto;
}

.grid thead .picked {
  padding-top: 0;
  border-bottom: 2px solid #217346;
  background: #d2d2d2;
  color: #217346;
}

.grid tbody .picked {
  border-right: 2px solid #217346;
  background: #d2d2d2;
  color: #217346;
}

.grid td {
  position: relative;
  height: 29px;
  padding: 0 3px;
  border-right: 1px solid #d4d4d4;
  border-bottom: 1px solid #d4d4d4;
  color: #000;
  font-family: "Liberation Serif", serif;
  font-size: 24px;
  line-height: 26px;
  text-align: center;
  vertical-align: bottom;
  white-space: nowrap;
}

.grid .data td {
  height: 31px;
  padding-bottom: 1px;
}

.grid .head td {
  height: 30px;
  font-weight: 700;
}

.grid td:nth-child(2) {
  text-align: left;
}

.grid td:last-child,
.grid th.rest {
  border-right: none;
}

.cursor {
  position: absolute;
  top: -2px;
  right: -2px;
  bottom: -2px;
  left: -2px;
  border: 2px solid #217346;
}

.cursor::after {
  content: "";
  position: absolute;
  right: -3px;
  bottom: -3px;
  width: 7px;
  height: 7px;
  border: solid #fff;
  border-width: 1px 0 0 1px;
  background: #217346;
}

.v-scroll {
  display: flex;
  flex-direction: column;
  width: 25px;
  margin: 0 3px 0 2px;
  background: #dadada;
}

.v-scroll button,
.h-scroll button {
  display: flex;
  justify-content: center;
  align-items: center;
  width: 25px;
  height: 25px;
  border: 1px solid #777;
  background: #fff;
}

.v-scroll svg,
.h-scroll svg {
  fill: #666;
}

.v-thumb {
  flex: 1;
  margin-bottom: 30px;
  border: 1px solid #777;
  background: #fff;
}

.sheet-tabs {
  display: flex;
  align-items: flex-start;
  height: 34px;
  border-bottom: 1px solid #c6c6c6;
}

.nav-arrow {
  margin: 9px 0 0 29px;
}

.nav-arrow svg {
  fill: #c3c3c3;
}

.sheet-tab {
  position: relative;
  width: 69px;
  height: 31px;
  margin: -1px 39px 0 48px;
  border: solid #999;
  border-width: 0 1px;
  border-bottom: 2px solid #217346;
  background: #fff;
  color: #217346;
  font-size: 18px;
  font-weight: 700;
}

.add {
  margin-top: 5px;
}

.h-dots {
  margin: 8px 16px 0 auto;
}

.h-scroll {
  display: flex;
  width: 723px;
  margin: 3px 29px 0 0;
  background: #dadada;
}

.h-thumb {
  flex: 1;
  margin-right: 38px;
  border: 1px solid #777;
  background: #fff;
}

/* status bar */
.status {
  display: flex;
  align-items: center;
  height: 32px;
  padding-left: 10px;
  background: #f3f3f3;
  font-size: 15px;
}

.access {
  display: flex;
  align-items: center;
  gap: 3px;
  margin-left: 30px;
}

.views {
  display: flex;
  margin: 0 8px 0 auto;
}

.view {
  display: flex;
  justify-content: center;
  align-items: center;
  width: 60px;
  height: 32px;
}

.view.on {
  background: #c6c6c6;
}

.zoom {
  display: flex;
  align-items: center;
  width: 257px;
  padding-right: 12px;
}

.zoom input {
  width: 148px;
  height: 18px;
  margin: 0 8px;
  background: linear-gradient(#222, #222) center / 100% 2px no-repeat;
  appearance: none;
}

.zoom input::-webkit-slider-thumb {
  width: 8px;
  height: 17px;
  background: #444;
  appearance: none;
}

.percent {
  margin-left: auto;
}

/* taskbar */
.taskbar {
  display: grid;
  grid-template-columns: 1fr auto 1fr;
  align-items: center;
  height: 72px;
  border-top: 2px solid #cbcbcb;
  background: #dadada;
}

.weather {
  display: flex;
  align-items: center;
  gap: 14px;
  padding-left: 33px;
  color: #1a1a1a;
  text-align: left;
}

.weather-text,
.clock {
  display: flex;
  flex-direction: column;
}

.sun {
  width: 30px;
  height: 30px;
  border-radius: 50%;
  background: linear-gradient(140deg, #efc038, #f06a0c 80%);
}

.muted {
  color: #606060;
}

.apps {
  display: flex;
  gap: 10px;
  padding-right: 3px;
}

.app {
  position: relative;
  display: flex;
  justify-content: center;
  align-items: center;
  width: 56px;
  height: 58px;
}

.current {
  width: 50px;
  margin-left: 3px;
  border-radius: 6px;
  background: #ededed;
  box-shadow: 0 0 0 1px #cfcfcf, 5px 0 0 0 #e6e6e6, 6px 0 0 0 #cfcfcf;
}

.mark {
  position: absolute;
  bottom: 0;
  width: 9px;
  height: 5px;
  border-radius: 3px;
  background: #777;
}

.mark.long {
  width: 24px;
  background: #0a74d6;
}

.tray {
  display: flex;
  justify-content: flex-end;
  align-items: center;
  gap: 12px;
  padding-right: 29px;
  color: #1a1a1a;
}

.wifi {
  margin-left: 5px;
}

.clock {
  margin-left: 9px;
  text-align: right;
}

.badge {
  width: 24px;
  height: 24px;
  border-radius: 50%;
  background: #0a78d4;
  color: #fff;
}
```

FILE: script.js
```js
const data = [
  ['Model', 'Weight', 'Price'],
  ['Fierro 7B', '17.9', '2200'],
  ['HX 5000', '16.2', '6350'],
  ['Durbin Ultralight', '15.0', '8470'],
  ['Schmidt', '16.0', '6300'],
  ['WSilton Advanced', '17.3', '4100'],
  ['bicyclette vélo', '13.2', '8700'],
  ['Supremo Team', '16.3', '6100'],
  ['XTC Racer', '17.2', '2680'],
  ['D’Onofrio Pro', '17.7', '3500'],
  ['Americana #6', '14.2', '8100']
];
const letters = 'ABCDEFGHIJKLMNOPQR'.split('');
const rowCount = 21;
const active = { row: 16, col: 2 };

let cols = '<col class="col-head">';
let head = '<th class="corner"><svg width="21" height="21"><path d="M21 0v21H0z" fill="#b3b3b3"/></svg></th>';
letters.forEach((letter, i) => {
  cols += `<col class="${i === 0 ? 'col-a' : 'col-std'}">`;
  head += `<th${i === active.col ? ' class="picked"' : ''}>${letter}</th>`;
});
document.getElementById('cols').innerHTML = cols + '<col>';
document.getElementById('letters').innerHTML = head + '<th class="rest"></th>';

let body = '';
for (let r = 1; r <= rowCount; r++) {
  const values = data[r - 1] || [];
  const kind = r === 1 ? 'head' : values.length ? 'data' : 'blank';
  body += `<tr class="${kind}"><th${r === active.row ? ' class="picked"' : ''}>${r}</th>`;
  for (let c = 0; c <= letters.length; c++) {
    const cursor = r === active.row && c === active.col ? '<i class="cursor"></i>' : '';
    body += `<td>${values[c] || ''}${cursor}</td>`;
  }
  body += '</tr>';
}
document.getElementById('rows').innerHTML = body;
```
